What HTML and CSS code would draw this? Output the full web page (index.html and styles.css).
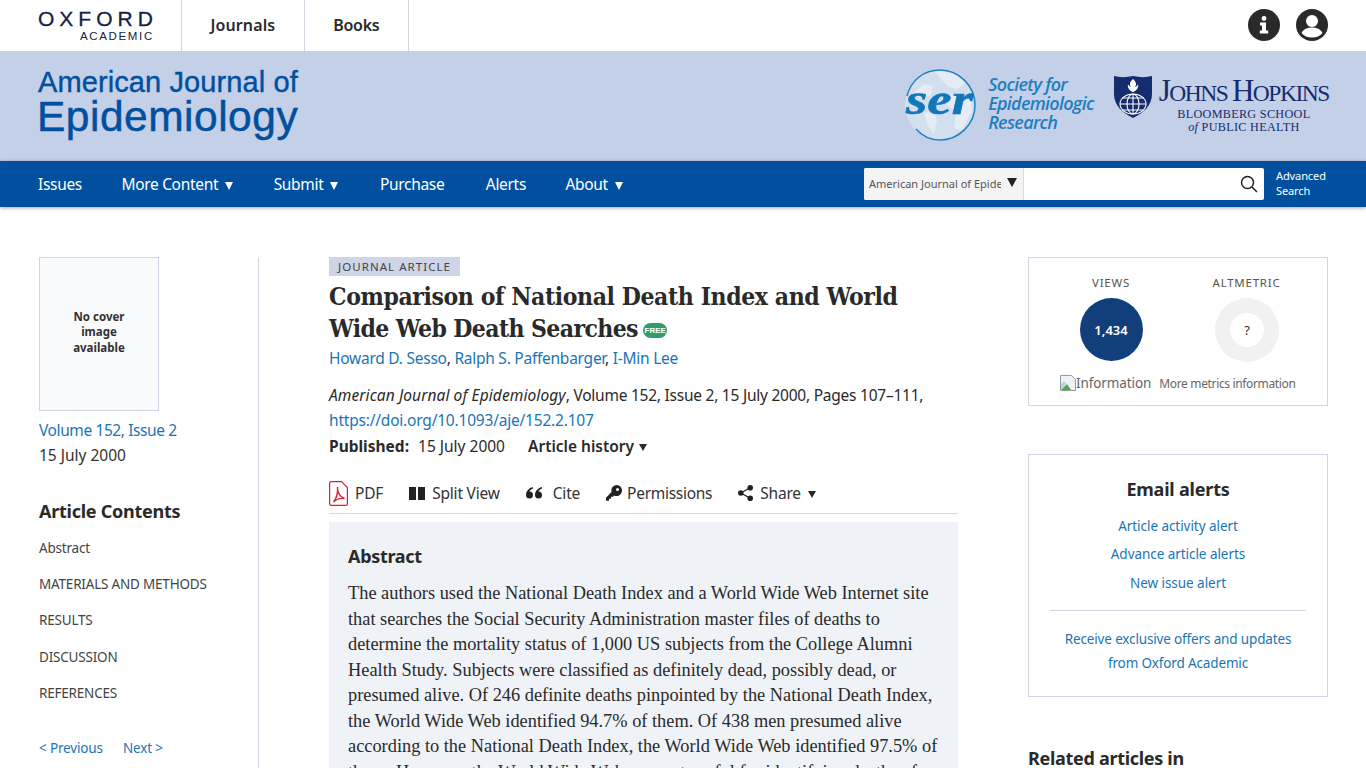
FILE: index.html
```html
<!DOCTYPE html>
<html lang="en">
<head>
<meta charset="utf-8">
<title>Comparison of National Death Index and World Wide Web Death Searches</title>
<link rel="stylesheet" href="styles.css">
</head>
<body>
<header class="top">
  <a class="ox-logo"><span class="ox-name">OXFORD</span><span class="ox-sub">ACADEMIC</span></a>
  <nav class="top-nav"><a class="tn-j">Journals</a><a class="tn-b">Books</a></nav>
  <div class="top-icons">
    <svg width="32" height="32" viewBox="0 0 32 32"><circle cx="16" cy="16" r="16" fill="#2a2a2a"/><circle cx="16" cy="9.500" r="2.400" fill="#fff"/><path d="M12 13.500h6v8h2.200v3h-8.400v-3H14v-5h-2z" fill="#fff"/></svg>
    <svg width="32" height="32" viewBox="0 0 32 32"><circle cx="16" cy="16" r="16" fill="#2a2a2a"/><circle cx="16" cy="12" r="6" fill="#fff"/><path d="M5.500 24c2-4 6-5.500 10.500-5.500S24.500 20 26.500 24c-2.500 3-6 4.500-10.500 4.500S8 27 5.500 24z" fill="#fff"/></svg>
  </div>
</header>
<section class="banner">
  <a class="journal-title"><span class="jt-a">American Journal of</span><span class="jt-b">Epidemiology</span></a>
  <div class="partners">
    <div class="ser">
      <svg class="ser-mark" width="73" height="72" viewBox="0 0 73 72">
        <circle cx="36" cy="36" r="35" fill="#d3deef"/>
        <path d="M31 3c11-2 23 1 30 11l-7 6-9-2-7-7zM40 27l13-3 14 5 1 13-10 19-8-2 2-15-9-8zM9 24l11-9 9 2-2 9-9 4zM20 44l9-2 4 9-3 14-6-8z" fill="#e6ecf6"/>
        <path d="M3 27C7 11 20 1 36 1c19 0 35 16 35 35S55 71 36 71c-8 0-17-3-24-11" fill="none" stroke="#1f83c2" stroke-width="1.500"/>
        <text class="ser-word" x="2" y="45" textLength="67" lengthAdjust="spacingAndGlyphs">ser</text>
      </svg>
      <div class="ser-text">Society for<br>Epidemiologic<br>Research</div>
    </div>
    <div class="jhu">
      <svg class="jhu-shield" width="38" height="42" viewBox="0 0 38 42">
        <path d="M0 0c6 1.500 12 1.500 19 0 7 1.500 13 1.500 19 0v18c0 12-9 19-19 24C9 37 0 30 0 18z" fill="#152c6e"/>
        <path d="M19 3c3 3 4 5 2 8 2-1 3-2 3-3 1 4-2 7-5 8-3-1-6-4-5-8 0 1 1 2 3 3-2-3-1-5 2-8z" fill="#fff"/>
        <g fill="none" stroke="#fff" stroke-width="1.100"><ellipse cx="19" cy="28" rx="13" ry="10"/><ellipse cx="19" cy="28" rx="6" ry="10"/><path d="M19 18v20M6 28h26M8 22h22M8 34h22"/></g>
      </svg>
      <div class="jhu-text"><div class="jhu-name"><span class="big">J</span>OHNS <span class="big">H</span>OPKINS</div><div class="jhu-sub">BLOOMBERG SCHOOL<br><i>of</i> PUBLIC HEALTH</div></div>
    </div>
  </div>
</section>
<nav class="main-nav">
  <ul class="nav-list">
    <li>Issues</li>
    <li>More Content<span class="caret"></span></li>
    <li>Submit<span class="caret"></span></li>
    <li class="nav-purchase">Purchase</li>
    <li class="nav-alerts">Alerts</li>
    <li>About<span class="caret"></span></li>
  </ul>
  <div class="search">
    <div class="search-box">
      <div class="search-scope"><span class="scope-text">American Journal of Epidemiology</span><span class="scope-caret"></span></div>
      <div class="search-input"><svg width="18" height="18" viewBox="0 0 18 18" fill="none" stroke="#222" stroke-width="1.500"><circle cx="7.500" cy="7.500" r="6"/><path d="M12 12l5 5"/></svg></div>
    </div>
    <a class="adv">Advanced<br>Search</a>
  </div>
</nav>
<main class="page">
  <aside class="left">
    <div class="cover"><span>No cover<br>image<br>available</span></div>
    <a class="link issue">Volume 152, Issue 2</a>
    <div class="issue-date">15 July 2000</div>
    <h2 class="contents-h">Article Contents</h2>
    <ul class="contents">
      <li>Abstract</li><li>MATERIALS AND METHODS</li><li>RESULTS</li><li>DISCUSSION</li><li>REFERENCES</li>
    </ul>
    <div class="prevnext"><a class="link">&lt; Previous</a><a class="link">Next &gt;</a></div>
  </aside>
  <article class="center">
    <span class="tag">JOURNAL ARTICLE</span>
    <h1 class="title">Comparison of National Death Index and World<br><span class="title-l2">Wide Web Death Searches</span> <span class="free">FREE</span></h1>
    <div class="authors"><a class="link">Howard D. Sesso</a>, <a class="link">Ralph S. Paffenbarger</a>, <a class="link">I-Min Lee</a></div>
    <div class="cite"><i class="cite-j">American Journal of Epidemiology</i><span class="cite-v">, Volume 152, Issue 2, 15 July 2000, Pages 107–111,</span><br><a class="link">https://doi.org/10.1093/aje/152.2.107</a></div>
    <div class="pub"><b>Published:</b><span class="pub-date">15 July 2000</span><b class="hist">Article history<span class="caret-s"></span></b></div>
    <div class="tools">
      <a class="tool tool-pdf"><svg width="19" height="25" viewBox="0 0 19 25" fill="none" stroke="#d6233c" stroke-width="1.200"><path d="M2.500.6h10l5.900 6v15.900a1.900 1.900 0 0 1-1.900 1.900h-14A1.900 1.900 0 0 1 .6 22.500V2.500A1.900 1.900 0 0 1 2.500.6z"/><path d="M8.500 6c-.5 5 2.500 10 7 11.500-4-.5-8 .5-11 3.500 2.500-3 4.500-9 4-15z" stroke-width="1.400"/></svg>PDF</a>
      <a class="tool tool-split"><svg width="16" height="13" viewBox="0 0 16 13"><path d="M0 0h7v13H0zM9 0h7v13H9z" fill="#222"/></svg>Split View</a>
      <a class="tool tool-cite"><svg width="16" height="12" viewBox="0 0 16 12" fill="#222"><path d="M7 0C3 1 0 4 0 8a3.500 3.500 0 1 0 3.500-3.500C4 3 5.500 2 7 1.500zM16 0c-4 1-7 4-7 8a3.500 3.500 0 1 0 3.500-3.500c.5-1.500 2-2.500 3.500-3z"/></svg>Cite</a>
      <a class="tool tool-perm"><svg width="16" height="16" viewBox="0 0 16 16"><path d="M10.500 0a5.500 5.500 0 1 1-2.300 10.500L7 11.700H5v2H3v2H0v-3l5.600-5.600A5.500 5.500 0 0 1 10.500 0z" fill="#222"/><circle cx="11.500" cy="4.500" r="1.500" fill="#fff"/></svg>Permissions</a>
      <a class="tool tool-share"><svg width="15" height="16" viewBox="0 0 15 16" fill="#222"><circle cx="2.800" cy="8" r="2.800"/><circle cx="12.200" cy="2.800" r="2.800"/><circle cx="12.200" cy="13.200" r="2.800"/><path d="M2.800 8l9.400-5.200M2.800 8l9.400 5.200" stroke="#222" stroke-width="1.300"/></svg>Share<span class="caret-s"></span></a>
    </div>
    <section class="abstract">
      <h2 class="abs-h">Abstract</h2>
      <p class="abs-p">The authors used the National Death Index and a World Wide Web Internet site<br>that searches the Social Security Administration master files of deaths to<br>determine the mortality status of 1,000 US subjects from the College Alumni<br>Health Study. Subjects were classified as definitely dead, possibly dead, or<br>presumed alive. Of 246 definite deaths pinpointed by the National Death Index,<br>the World Wide Web identified 94.7% of them. Of 438 men presumed alive<br>according to the National Death Index, the World Wide Web identified 97.5% of<br>those. However, the World Wide Web was not useful for identifying deaths of</p>
    </section>
  </article>
  <aside class="right">
    <div class="box metrics">
      <div class="metric-row">
        <div class="metric"><div class="m-label">VIEWS</div><div class="views-circle">1,434</div></div>
        <div class="metric"><div class="m-label">ALTMETRIC</div>
          <svg class="alt-circle" width="64" height="64" viewBox="0 0 64 64">
            <g fill="#dedede" opacity=".42"><ellipse cx="32" cy="15" rx="20" ry="15" transform="rotate(0 32 32)"/><ellipse cx="32" cy="15" rx="20" ry="15" transform="rotate(45 32 32)"/><ellipse cx="32" cy="15" rx="20" ry="15" transform="rotate(90 32 32)"/><ellipse cx="32" cy="15" rx="20" ry="15" transform="rotate(135 32 32)"/><ellipse cx="32" cy="15" rx="20" ry="15" transform="rotate(180 32 32)"/><ellipse cx="32" cy="15" rx="20" ry="15" transform="rotate(225 32 32)"/><ellipse cx="32" cy="15" rx="20" ry="15" transform="rotate(270 32 32)"/><ellipse cx="32" cy="15" rx="20" ry="15" transform="rotate(315 32 32)"/></g>
            <circle cx="32" cy="32" r="17" fill="#fff"/>
            <text class="alt-q" x="32" y="37">?</text>
          </svg>
        </div>
      </div>
      <div class="m-foot">
        <span class="m-info"><svg width="16" height="16" viewBox="0 0 16 16"><path d="M.5.500h11l4 4v11H.5z" fill="#eef2f7" stroke="#9a9a9a"/><path d="M1 15l6-6 4 6z" fill="#4fa83d"/><path d="M1 9l3-3 3 3-6 6z" fill="#b9d3ee"/></svg>Information</span>
        <span class="m-more">More metrics information</span>
      </div>
    </div>
    <div class="box alerts">
      <h3 class="alerts-h">Email alerts</h3>
      <a class="link al">Article activity alert</a>
      <a class="link al">Advance article alerts</a>
      <a class="link al">New issue alert</a>
      <hr class="al-rule">
      <a class="link al-offer">Receive exclusive offers and updates<br>from Oxford Academic</a>
    </div>
    <h3 class="related">Related articles in</h3>
  </aside>
</main>
</body>
</html>
```
FILE: styles.css
```css
* { box-sizing: border-box; }
html, body { height: 768px; overflow: hidden; }
body { margin: 0; background: #fff; color: #2a2a2a; font-family: "Noto Sans", "Liberation Sans", sans-serif; font-size: 15px; }
a { color: inherit; text-decoration: none; }
ul { list-style: none; margin: 0; padding: 0; }
h1, h2, h3, p { margin: 0; }
.link { color: #1a75b5; }

.top { height: 51px; display: flex; padding-left: 38px; background: #fff; }
.ox-logo { width: 143px; display: flex; flex-direction: column; align-items: flex-start; padding-top: 7px; color: #14233f; }
.ox-name { font: 400 21px/23px "Liberation Sans", sans-serif; letter-spacing: 5px; -webkit-text-stroke: .3px #14233f; white-space: nowrap; }
.ox-sub { font: 400 11.500px/12px "Liberation Sans", sans-serif; letter-spacing: 1.650px; margin-left: 42px; white-space: nowrap; }
.top-nav { display: flex; }
.top-nav a { display: flex; align-items: center; padding: 0 28.500px 2px; border-left: 1px solid #d3d6e0; font-weight: 600; font-size: 16px; color: #2a2a2a; }
.top-nav a:last-child { border-right: 1px solid #d3d6e0; }
.tn-j { letter-spacing: .1px; }
.tn-b { letter-spacing: -.3px; }
.top-icons { margin-left: auto; display: flex; gap: 16px; padding: 9px 38px 0 0; }

.banner { height: 110px; background: #c4cfe8; display: flex; justify-content: space-between; padding: 0 37px 0 38px; }
.journal-title { color: #00509f; display: flex; flex-direction: column; padding-top: 15px; font-family: "Liberation Sans", sans-serif; }
.jt-a { font-size: 29px; line-height: 32px; letter-spacing: .1px; -webkit-text-stroke: .4px #00509f; }
.jt-b { font-size: 42.500px; line-height: 38px; letter-spacing: .5px; margin-left: -1px; -webkit-text-stroke: .5px #00509f; }
.partners { display: flex; gap: 20px; padding-top: 18px; }
.ser { display: flex; gap: 11px; }
.ser-word { font: italic 700 44px "Liberation Serif", serif; fill: #1277b8; stroke: #1277b8; stroke-width: .6px; }
.ser-text { color: #1f7fc0; font: italic 600 18px/19px "Open Sans", sans-serif; letter-spacing: -.7px; padding-top: 6px; white-space: nowrap; }
.jhu { display: flex; gap: 7px; padding-top: 7px; }
.jhu-text { color: #152c6e; font-family: "Liberation Serif", serif; text-align: center; }
.jhu-name { font-size: 23.500px; line-height: 29px; letter-spacing: -1.450px; white-space: nowrap; }
.jhu-name .big { font-size: 31px; }
.jhu-sub { font-size: 12.200px; line-height: 13px; letter-spacing: .3px; }

.main-nav { height: 46px; background: #00509f; box-shadow: 0 1px 4px rgba(0,0,0,.35); position: relative; display: flex; justify-content: space-between; padding-left: 38px; color: #fff; }
.nav-list { display: flex; gap: 39.500px; align-items: center; font-size: 15.500px; letter-spacing: -.32px; }
.nav-list li { display: flex; align-items: center; }
.nav-purchase { margin-left: 1px; }
.nav-alerts { margin-left: 2px; }
.caret { display: inline-block; width: 0; height: 0; border-left: 4.500px solid transparent; border-right: 4.500px solid transparent; border-top: 8px solid #fff; margin: 3px 1px 0 7px; }
.search { display: flex; align-items: center; }
.search-box { width: 400px; height: 32px; display: flex; background: #fff; border-radius: 2px; overflow: hidden; }
.search-scope { width: 160px; flex: none; display: flex; align-items: center; background: #f4f4f4; border-right: 1px solid #ddd; padding: 0 0 2px 5px; color: #555; font-size: 11px; }
.scope-text { width: 132px; flex: none; overflow: hidden; white-space: nowrap; }
.scope-caret { width: 0; height: 0; border-left: 5px solid transparent; border-right: 5px solid transparent; border-top: 9px solid #222; margin: -2px 0 0 6px; }
.search-input { flex: 1; display: flex; align-items: center; justify-content: flex-end; padding-right: 6px; }
.adv { font-size: 11px; line-height: 15px; width: 102px; padding-left: 12px; letter-spacing: -.1px; padding-bottom: 2px; }

.page { display: flex; padding: 50px 38px 0 39px; align-items: flex-start; }
.left { width: 220px; height: 520px; border-right: 1px solid #d3d6e0; padding-right: 20px; flex: none; }
.cover { width: 120px; height: 154px; background: #f9fafb; border: 1px solid #cdd5e6; display: flex; align-items: center; justify-content: center; text-align: center; font-size: 11.500px; font-weight: 700; line-height: 15.500px; color: #333; padding-bottom: 4px; }
.issue { display: block; margin-top: 8px; font-size: 15.500px; line-height: 22px; letter-spacing: -.4px; }
.issue-date { margin-top: 3px; font-size: 15.500px; line-height: 22px; color: #333; }
.contents-h { margin-top: 33px; font-size: 18px; line-height: 24px; font-weight: 700; letter-spacing: -.25px; }
.contents { margin-top: 15px; font-size: 13.500px; letter-spacing: -.2px; color: #444; }
.contents li { height: 36.200px; line-height: 20px; }
.prevnext { display: flex; gap: 20px; margin-top: 20px; font-size: 13.500px; letter-spacing: -.15px; }

.center { width: 629px; margin-left: 70px; flex: none; }
.tag { display: block; width: fit-content; background: #cdd5e6; height: 19px; padding: 0 9px; font-size: 11.500px; line-height: 20px; letter-spacing: 1.050px; color: #444; }
.title { font: 700 24.500px/32px "DejaVu Serif Condensed", "Liberation Serif", serif; letter-spacing: -.4px; margin-top: 5px; color: #2a2a2a; white-space: nowrap; }
.title-l2 { letter-spacing: -.6px; }
.free { display: inline-block; vertical-align: 4px; width: 24px; height: 15px; margin-left: -2px; border-radius: 8px; background: #2e9e69; color: #fff; font: 700 8px/15px "Liberation Sans", sans-serif; letter-spacing: 0; text-align: center; }
.authors { margin-top: 2px; font-size: 15.500px; line-height: 22px; letter-spacing: -.25px; }
.cite { margin-top: 14px; font-size: 15.500px; line-height: 25px; letter-spacing: -.2px; }
.cite-j { letter-spacing: .1px; }
.cite-v { letter-spacing: -.24px; }
.pub { display: flex; margin-top: .500px; font-size: 15.500px; line-height: 25px; }
.pub-date { margin-left: 9px; }
.hist { margin-left: 23px; font-weight: 600; display: flex; align-items: center; }
.caret-s { display: inline-block; width: 0; height: 0; border-left: 4px solid transparent; border-right: 4px solid transparent; border-top: 7px solid #2a2a2a; margin: 3px 0 0 5px; }
.tools { display: flex; align-items: center; gap: 26px; height: 46px; margin-top: 9.500px; border-bottom: 1px solid #d8d8dc; font-size: 15.500px; letter-spacing: -.2px; padding-top: 5px; }
.tool { display: flex; align-items: center; gap: 7px; color: #333; }
.tool-cite { gap: 11px; }
.tool-perm { gap: 5px; letter-spacing: -.28px; }
.tool-share { gap: 7px; }
.tool-share .caret-s { margin-left: 0; }
.abstract { margin-top: 8px; background: #eff2f7; height: 260px; padding: 22px 19px 0; }
.abs-h { font-size: 18px; line-height: 24px; font-weight: 700; letter-spacing: -.3px; }
.abs-p { margin-top: 13px; font: 400 18.350px/25.500px "Liberation Serif", serif; white-space: nowrap; }

.right { width: 300px; margin-left: 70px; flex: none; }
.box { border: 1px solid #cdd5e6; }
.metrics { height: 149px; padding-top: 17px; }
.metric-row { display: flex; }
.metric { display: flex; flex-direction: column; align-items: center; }
.metric:first-child { width: 164px; }
.metric:last-child { width: 107px; }
.m-label { font-size: 11.500px; line-height: 16px; letter-spacing: .75px; color: #555; }
.views-circle { margin-top: 7px; width: 63px; height: 63px; border-radius: 50%; background: #123f7c; color: #fff; display: flex; align-items: center; justify-content: center; font-size: 13px; font-weight: 600; }
.alt-circle { margin-top: 7px; display: block; }
.alt-q { font: 400 13px "Noto Sans", sans-serif; text-anchor: middle; fill: #333; }
.m-foot { display: flex; align-items: center; padding: 12px 0 0 31px; gap: 8px; color: #666; }
.m-info { display: flex; align-items: center; font-size: 13.500px; letter-spacing: -.1px; }
.m-more { font-size: 12px; letter-spacing: -.35px; }
.alerts { margin-top: 48px; height: 243px; display: flex; flex-direction: column; align-items: center; padding: 22px 21px 0; }
.alerts-h { font-size: 18px; line-height: 24px; font-weight: 700; letter-spacing: -.2px; }
.al { font-size: 13.500px; line-height: 20px; letter-spacing: -.05px; height: 28.400px; }
.alerts-h + .al { margin-top: 15px; }
.al-rule { width: 100%; border: 0; border-top: 1px solid #d3d6e0; margin: 9.300px 0 16px; }
.al-offer { font-size: 13.500px; line-height: 24px; text-align: center; letter-spacing: -.15px; }
.related { margin-top: 49px; font-size: 18px; line-height: 24px; font-weight: 700; letter-spacing: -.3px; }
```
